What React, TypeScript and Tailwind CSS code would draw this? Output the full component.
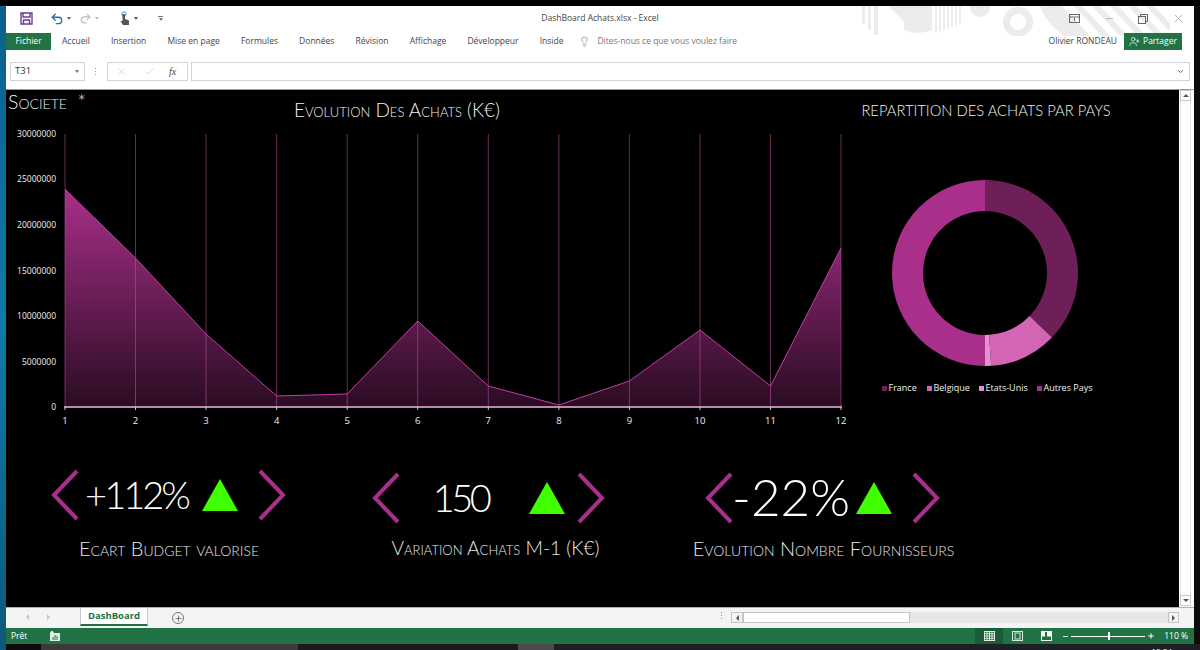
import { ChevronDown, Check, Lightbulb, Minus, Plus, Redo2, Undo2, UserPlus, X } from "lucide-react";

const tabs = ["Accueil", "Insertion", "Mise en page", "Formules", "Données", "Révision", "Affichage", "Développeur", "Inside"];

// Values read in screen pixels, the viewBox of the chart uses the same coordinates
const chartX = [65, 135.5, 206, 276.6, 347.2, 417.7, 488.3, 558.9, 629.4, 700, 770.5, 841];
const chartY = [189, 258, 334, 396, 394, 321, 386, 405, 381, 330, 386, 248];
const yLabels = [
  { label: "30000000", y: 134 },
  { label: "25000000", y: 179 },
  { label: "20000000", y: 225 },
  { label: "15000000", y: 271 },
  { label: "10000000", y: 316 },
  { label: "5000000", y: 362 },
  { label: "0", y: 407 },
];

const legend = [
  { name: "France", color: "bg-[#6e1f57]", className: "w-[45px]" },
  { name: "Belgique", color: "bg-[#d465b5]", className: "w-[52px]" },
  { name: "Etats-Unis", color: "bg-[#e48fd0]", className: "w-[58px]" },
  { name: "Autres Pays", color: "bg-[#a92f8a]", className: "w-[54px]" },
];

const kpis = [
  {
    value: "+112%",
    label: "Ecart Budget valorise",
    box: "w-[236px] mr-[85px]",
    num: "w-[118px] pr-[3px] text-[38px] tracking-[-3px]",
    triangle: "ml-[5px]",
    after: "ml-[20px]",
    row: "mt-0",
    labelClass: "mt-[14px] text-[20px]",
  },
  {
    value: "150",
    label: "Variation Achats M-1 (K€)",
    box: "w-[235px] mr-[98px]",
    num: "w-[126px] pr-[5px] text-[38px] tracking-[-3.5px]",
    triangle: "ml-[3px]",
    after: "ml-[12px]",
    row: "mt-[3px]",
    labelClass: "mt-[11px] ml-[12px] text-[19.2px]",
  },
  {
    value: "-22%",
    label: "Evolution Nombre Fournisseurs",
    box: "w-[237px]",
    num: "w-[116px] text-[51px]",
    triangle: "ml-[7px]",
    after: "ml-[20px]",
    row: "mt-[3px]",
    labelClass: "mt-[11px] text-[20px]",
  },
];

function arc(a0: number, a1: number) {
  const cx = 985, cy = 273, R = 93, r = 62;
  const p = (rad: number, a: number) => {
    const t = (a * Math.PI) / 180;
    return `${(cx + rad * Math.sin(t)).toFixed(2)} ${(cy - rad * Math.cos(t)).toFixed(2)}`;
  };
  const large = a1 - a0 > 180 ? 1 : 0;
  return `M${p(R, a0)} A${R} ${R} 0 ${large} 1 ${p(R, a1)} L${p(r, a1)} A${r} ${r} 0 ${large} 0 ${p(r, a0)} Z`;
}

function Chevron({ left }: { left?: boolean }) {
  return (
    <svg width="28" height="52" viewBox="0 0 28 52" className="shrink-0">
      <path d={left ? "M26 2 L3 26 L26 50" : "M2 2 L25 26 L2 50"} fill="none" stroke="#a92f8a" strokeWidth="4" />
    </svg>
  );
}

function Kpi({ kpi }: { kpi: (typeof kpis)[number] }) {
  return (
    <div className={`flex flex-col items-center shrink-0 ${kpi.box}`}>
      <div className={`flex items-center w-full ${kpi.row}`}>
        <Chevron left />
        <div className={`h-[52px] pb-[3px] flex items-center justify-center font-light leading-none text-white shrink-0 ${kpi.num}`}>
          {kpi.value}
        </div>
        <div className={`w-0 h-0 border-l-[18.5px] border-r-[18.5px] border-b-[32px] border-l-transparent border-r-transparent border-b-[#3fff00] shrink-0 ${kpi.triangle}`} />
        <div className={`shrink-0 ${kpi.after}`}>
          <Chevron />
        </div>
      </div>
      <div className={`whitespace-nowrap leading-[26px] font-light text-[#e4e8ec] [font-variant-caps:small-caps] ${kpi.labelClass}`}>
        {kpi.label}
      </div>
    </div>
  );
}

function Chart() {
  const line = chartX.map((x, i) => `${x},${chartY[i]}`).join(" ");
  return (
    <svg width="844" height="305" viewBox="6 125 844 305" className="block">
      <defs>
        <linearGradient id="area" gradientUnits="userSpaceOnUse" x1="0" y1="189" x2="0" y2="407">
          <stop offset="0" stopColor="#a92f8a" />
          <stop offset="1" stopColor="#2a0c22" />
        </linearGradient>
      </defs>
      <polygon points={`65,407 ${line} 841,407`} fill="url(#area)" />
      <polyline points={line} fill="none" stroke="#c13f9f" strokeWidth="1" />
      {chartX.map((x) => (
        <line key={x} x1={x} x2={x} y1={134} y2={407} stroke="#c0509f" strokeOpacity="0.55" strokeWidth="1" />
      ))}
      <line x1="64" x2="842" y1="407" y2="407" stroke="#b98aaa" strokeWidth="2" />
      {chartX.map((x) => (
        <line key={x} x1={x} x2={x} y1={407} y2={410} stroke="#c8c8c8" strokeWidth="1" />
      ))}
      {yLabels.map((l) => (
        <text key={l.label} x="56" y={l.y + 3} textAnchor="end" fontSize="8.5" fontWeight="500" fill="#f2f2f2" fontFamily="'Open Sans', sans-serif">
          {l.label}
        </text>
      ))}
      {chartX.map((x, i) => (
        <text key={x} x={x} y="424" textAnchor="middle" fontSize="9.5" fontWeight="500" fill="#f2f2f2" fontFamily="'Open Sans', sans-serif">
          {i + 1}
        </text>
      ))}
    </svg>
  );
}

function TitleDecor() {
  return (
    <svg width="310" height="30" viewBox="860 6 310 30" className="absolute left-[854px] top-0 pointer-events-none">
      <g fill="#ececec">
        <rect x="862" y="6" width="3" height="18" />
        <rect x="868" y="6" width="3" height="24" />
        <rect x="874" y="6" width="4" height="29" />
        <path d="M889 6 L904 6 L904 22 Z" />
        <path d="M904 6 H932 V30 Q918 36 904 30 Z" />
        {[935, 939, 943, 947, 951, 955, 959].map((x, i) => (
          <rect key={x} x={x} y="6" width="2" height={27 - i * 1.5} />
        ))}
        <circle cx="980" cy="7" r="10" />
        <path fillRule="evenodd" d="M1003 22 a15 15 0 1 0 30 0 a15 15 0 1 0 -30 0 Z M1010 22 a8 8 0 1 1 16 0 a8 8 0 1 1 -16 0 Z" />
        <path d="M1040 6 H1062 L1090 36 H1064 Q1045 22 1040 6 Z" />
        {[0, 1, 2, 3, 4].map((i) => (
          <path key={i} d={`M${1074 + i * 18} 6 h8 l28 30 h-8 Z`} />
        ))}
      </g>
    </svg>
  );
}

function SaveIcon() {
  return (
    <svg width="13" height="13" viewBox="0 0 13 13" fill="none" stroke="#6f3a94" strokeWidth="1.4">
      <path d="M1 1 H12 V12 H1 Z" />
      <path d="M3 1 V5 H10 V1" />
      <path d="M3.5 12 V8 H9.5 V12" />
    </svg>
  );
}

function TouchIcon() {
  return (
    <svg width="13" height="15" viewBox="0 0 13 15">
      <circle cx="6" cy="3" r="2.2" fill="none" stroke="#4a90c8" strokeWidth="1" />
      <path d="M4.5 3 H7 V8 L11 9.5 V14 H5 L2.5 10 L4.5 10 Z" fill="#555" />
    </svg>
  );
}

function Caret({ className }: { className: string }) {
  return <div className={`w-0 h-0 border-l-[2.5px] border-r-[2.5px] border-t-[3px] border-l-transparent border-r-transparent ${className}`} />;
}

export default function App() {
  return (
    <div className="w-[1200px] h-[650px] overflow-hidden bg-black flex flex-col font-['Open_Sans',sans-serif]">
      <div className="h-[6px] bg-black shrink-0" />

      <div className="flex h-[638px] shrink-0">
        <div className="w-[6px] bg-gradient-to-b from-[#0a5f8c] via-[#0f7ba8] to-[#0b5a7c]" />

        {/* Excel window */}
        <div className="w-[1188px] flex flex-col bg-white relative">
          <TitleDecor />

          {/* Title bar */}
          <div className="relative h-[24px] pt-[1px] grid grid-cols-[1fr_auto_1fr] items-center text-[#444]">
            <div className="flex items-center pl-[14px]">
              <SaveIcon />
              <Undo2 className="w-[14px] h-[14px] text-[#2a6fb5] ml-[17px]" strokeWidth={2.4} />
              <Caret className="border-t-[#666] ml-[3px]" />
              <Redo2 className="w-[13px] h-[13px] text-[#bbb] ml-[8px]" />
              <Caret className="border-t-[#bbb] ml-[3px]" />
              <div className="ml-[19px] flex items-center">
                <TouchIcon />
              </div>
              <Caret className="border-t-[#555] ml-[3px]" />
              <div className="ml-[20px] w-[5px] flex flex-col items-center gap-[1px]">
                <div className="w-[5px] h-px bg-[#777]" />
                <Caret className="border-t-[#777]" />
              </div>
            </div>
            <div className="text-[8.5px] whitespace-nowrap text-[#444]">DashBoard Achats.xlsx - Excel</div>
            <div className="flex items-center justify-end pr-[9px] text-[#777]">
              <svg width="11" height="9" viewBox="0 0 11 9" fill="none" stroke="#666" className="mr-[24px]">
                <rect x="0.5" y="0.5" width="10" height="8" />
                <path d="M0.5 3 H10.5 M5.5 7 V4" />
              </svg>
              <Minus className="w-[11px] h-[11px] mr-[23px]" strokeWidth={1} />
              <svg width="10" height="10" viewBox="0 0 10 10" fill="none" stroke="#666" className="mr-[24px]">
                <rect x="0.5" y="2.5" width="7" height="7" />
                <path d="M2.5 2.5 V0.5 H9.5 V7.5 H7.5" />
              </svg>
              <X className="w-[13px] h-[13px]" strokeWidth={1} />
            </div>
          </div>

          {/* Ribbon tabs */}
          <div className="relative h-[22px] flex items-center text-[8.5px] text-[#444]">
            <div className="w-[45px] h-[17px] bg-[#217346] text-white flex items-center justify-center mr-[11px]">Fichier</div>
            <div className="flex items-center gap-[21.15px]">
              {tabs.map((t) => (
                <span key={t} className="whitespace-nowrap">{t}</span>
              ))}
            </div>
            <Lightbulb className="w-[11px] h-[11px] text-[#666] ml-[16px]" strokeWidth={1.3} />
            <span className="ml-[7px] text-[#777] whitespace-nowrap">Dites-nous ce que vous voulez faire</span>
            <div className="ml-auto flex items-center pr-[12px]">
              <span className="mr-[7px] whitespace-nowrap">Olivier RONDEAU</span>
              <div className="w-[58px] h-[17px] bg-[#217346] text-white flex items-center justify-center gap-[3px]">
                <UserPlus className="w-[11px] h-[11px]" strokeWidth={1.5} />
                <span>Partager</span>
              </div>
            </div>
          </div>

          {/* Formula bar */}
          <div className="h-[38px] pt-[1px] flex items-center px-[4px] text-[9.5px] text-[#333] border-b border-[#9a9a9a]">
            <div className="w-[75px] h-[19px] border border-[#d4d4d4] flex items-center justify-between px-[4px]">
              <span>T31</span>
              <Caret className="border-t-[#777] mr-[1px]" />
            </div>
            <div className="w-[9px] ml-[6px] flex flex-col items-center gap-[2px]">
              <div className="w-px h-px bg-[#999]" />
              <div className="w-px h-px bg-[#999]" />
              <div className="w-px h-px bg-[#999]" />
            </div>
            <div className="ml-[7px] w-[81px] h-[19px] border border-[#d4d4d4] flex items-center pl-[8px]">
              <X className="w-[11px] h-[11px] text-[#bbb]" strokeWidth={1.2} />
              <Check className="w-[11px] h-[11px] text-[#bbb] ml-[17px]" strokeWidth={1.2} />
              <span className="ml-[14px] italic font-['Liberation_Serif',serif] text-[10px] text-[#444]">fx</span>
            </div>
            <div className="ml-[3px] flex-1 h-[19px] border border-[#d4d4d4] flex items-center justify-end pr-[4px]">
              <ChevronDown className="w-[9px] h-[9px] text-[#666]" strokeWidth={2.5} />
            </div>
          </div>

          {/* Sheet */}
          <div className="h-[517px] flex">
            <div className="w-[1173px] bg-black flex flex-col font-['Lato',sans-serif] text-[#eef0f2]">
              <div className="flex h-[345px]">
                <div className="w-[844px] flex flex-col">
                  <div className="h-[35px] flex">
                    <div className="w-[288px] pl-[2px] text-[19.5px] leading-[24px] font-light [font-variant-caps:small-caps] whitespace-nowrap">
                      Societe&nbsp;&nbsp;*
                    </div>
                    <div className="pt-[7px] text-[19px] leading-[26px] font-light [font-variant-caps:small-caps] whitespace-nowrap">
                      Evolution Des Achats (K€)
                    </div>
                  </div>
                  <Chart />
                </div>
                <div className="w-[272px] flex flex-col items-center">
                  <div className="h-[38px] pt-[8px] text-[14.75px] leading-[24px] font-light whitespace-nowrap uppercase">
                    Repartition des achats par pays
                  </div>
                  <svg width="272" height="208" viewBox="850 170 272 208" className="block mt-[42px]">
                    <path d={arc(0, 134)} fill="#6e1f57" />
                    <path d={arc(134, 176.2)} fill="#d465b5" />
                    <path d={arc(176.2, 180)} fill="#e48fd0" />
                    <path d={arc(180, 360)} fill="#a92f8a" />
                  </svg>
                  <div className="mt-[4px] flex items-center text-[9px] leading-[12px] font-['Open_Sans',sans-serif] text-[#f0f0f0]">
                    {legend.map((l) => (
                      <div key={l.name} className={`flex items-center gap-[2px] whitespace-nowrap shrink-0 ${l.className}`}>
                        <div className={`w-[5px] h-[5px] shrink-0 ${l.color}`} />
                        <span>{l.name}</span>
                      </div>
                    ))}
                  </div>
                </div>
              </div>

              {/* KPI row */}
              <div className="flex pl-[45px] pt-[34px] font-['Lato',sans-serif]">
                {kpis.map((k) => (
                  <Kpi key={k.value} kpi={k} />
                ))}
              </div>
            </div>

            {/* Vertical scrollbar */}
            <div className="w-[15px] bg-white flex flex-col items-center pr-[2px] pb-[1px] text-[#555]">
              <div className="w-[11px] h-[11px] border border-[#c8c8c8] flex items-center justify-center">
                <div className="w-0 h-0 border-l-[3px] border-r-[3px] border-b-[3px] border-l-transparent border-r-transparent border-b-[#555]" />
              </div>
              <div className="flex-1 w-[11px] border-x border-[#e4e4e4]" />
              <div className="w-[11px] h-[11px] border border-[#c8c8c8] flex items-center justify-center">
                <div className="w-0 h-0 border-l-[3px] border-r-[3px] border-t-[3px] border-l-transparent border-r-transparent border-t-[#555]" />
              </div>
            </div>
          </div>

          {/* Sheet tabs */}
          <div className="h-[21px] flex items-start bg-[#f4f4f4] border-t border-[#b0b0b0] pr-[15px]">
            <div className="flex items-center h-[18px] pl-[20px] w-[74px] gap-[18px]">
              <div className="w-0 h-0 border-y-[3px] border-r-[3px] border-y-transparent border-r-[#c4c4c4]" />
              <div className="w-0 h-0 border-y-[3px] border-l-[3px] border-y-transparent border-l-[#c4c4c4]" />
            </div>
            <div className="w-[68px] h-[18px] pt-[1px] bg-white border-x border-[#c8c8c8] border-b-2 border-b-[#217346] flex items-center justify-center text-[9.5px] font-bold text-[#217346]">
              DashBoard
            </div>
            <div className="ml-[24px] mt-[4px] w-[12px] h-[12px] rounded-full border border-[#777] flex items-center justify-center">
              <Plus className="w-[9px] h-[9px] text-[#555]" strokeWidth={2} />
            </div>
            <div className="ml-auto mr-[9px] mt-[4px] flex flex-col gap-[2px]">
              <div className="w-px h-px bg-[#888]" />
              <div className="w-px h-px bg-[#888]" />
              <div className="w-px h-px bg-[#888]" />
            </div>
            <div className="w-[448px] h-[11px] mt-[4px] flex bg-[#e6e6e6]">
              <div className="w-[12px] border border-[#c4c4c4] bg-[#f4f4f4] flex items-center justify-center">
                <div className="w-0 h-0 border-y-[3px] border-r-[3px] border-y-transparent border-r-[#555]" />
              </div>
              <div className="w-[167px] bg-white border border-[#c4c4c4]" />
              <div className="flex-1" />
              <div className="w-[11px] border border-[#c4c4c4] bg-[#f4f4f4] flex items-center justify-center">
                <div className="w-0 h-0 border-y-[3px] border-l-[3px] border-y-transparent border-l-[#555]" />
              </div>
            </div>
          </div>

          {/* Status bar */}
          <div className="h-[16px] flex items-center bg-[#217346] text-white text-[8.5px]">
            <span className="ml-[5px]">Prêt</span>
            <svg width="10" height="10" viewBox="0 0 10 10" className="ml-[23px]">
              <rect x="0" y="2" width="10" height="8" fill="#dfeee6" />
              <circle cx="2" cy="1.5" r="1.5" fill="#fff" />
              <path d="M3 9 V6 M5 9 V4 M7 9 V5" stroke="#217346" strokeWidth="1" />
            </svg>
            <div className="ml-auto flex items-center h-full">
              <div className="w-[28px] h-full bg-[#1a5c38] flex items-center justify-center">
                <svg width="11" height="10" viewBox="0 0 11 10" fill="#1a5c38" stroke="#fff" strokeWidth="0.8">
                  <rect x="0.4" y="0.4" width="10.2" height="9.2" />
                  <path d="M3 0 V10 M5.5 0 V10 M8 0 V10 M0 2.7 H11 M0 5 H11 M0 7.3 H11" />
                </svg>
              </div>
              <svg width="11" height="10" viewBox="0 0 11 10" fill="none" stroke="#d8e8df" className="ml-[8.5px]">
                <rect x="0.5" y="0.5" width="10" height="9" />
                <rect x="3" y="2" width="5" height="6" />
              </svg>
              <svg width="11" height="10" viewBox="0 0 11 10" fill="none" className="ml-[18px]">
                <rect x="0.5" y="0.5" width="10" height="9" stroke="#fff" />
                <rect x="1" y="1" width="3" height="4.5" fill="#fff" />
                <rect x="6" y="1" width="4" height="4.5" fill="#fff" />
              </svg>
              <Minus className="w-[7px] h-[7px] ml-[10px]" strokeWidth={3} />
              <div className="ml-[2.5px] w-[74px] h-px bg-white flex items-center justify-center">
                <div className="w-[2.5px] h-[8px] bg-white ml-[2px]" />
              </div>
              <Plus className="w-[8px] h-[8px] ml-[2px]" strokeWidth={3} />
              <span className="ml-[9px] mr-[6px] whitespace-nowrap">110 %</span>
            </div>
          </div>
        </div>

        <div className="w-[6px] bg-[#0c0c0c]" />
      </div>

      {/* Desktop behind the window */}
      <div className="h-[6px] shrink-0 flex bg-[#1c2024] overflow-hidden">
        <div className="w-[6px] bg-[#0b5a7c]" />
        <div className="w-[35px] bg-[#0c0c0c]" />
        <div className="w-[257px] bg-[#3a3a3a]" />
        <div className="w-[220px] bg-[#1a1a1a]" />
        <div className="w-[36px] bg-[#4a4a4a]" />
        <div className="ml-auto mr-[28px] text-[8px] leading-[8px] text-white pt-[3px]">15:04</div>
      </div>
    </div>
  );
}
